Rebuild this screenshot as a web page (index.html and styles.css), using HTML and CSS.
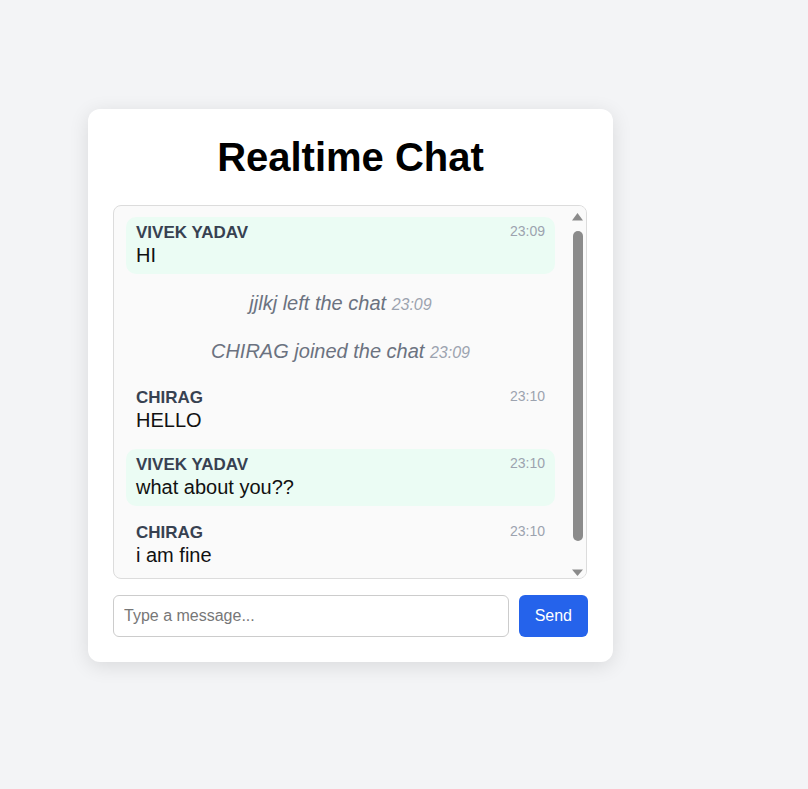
FILE: index.html
```html
<!DOCTYPE html>
<html lang="en">
<head>
<meta charset="utf-8">
<title>Realtime Chat</title>
<link rel="stylesheet" href="styles.css">
</head>
<body>
<div class="card">
  <h1 class="title">Realtime Chat</h1>
  <div class="chat-box">
    <div class="messages">
      <div class="msg msg-own">
        <div class="msg-head"><span class="msg-name">VIVEK YADAV</span><span class="msg-time">23:09</span></div>
        <div class="msg-text">HI</div>
      </div>
      <div class="sys">jjlkj left the chat <span class="sys-time">23:09</span></div>
      <div class="sys">CHIRAG joined the chat <span class="sys-time">23:09</span></div>
      <div class="msg">
        <div class="msg-head"><span class="msg-name">CHIRAG</span><span class="msg-time">23:10</span></div>
        <div class="msg-text">HELLO</div>
      </div>
      <div class="msg msg-own">
        <div class="msg-head"><span class="msg-name">VIVEK YADAV</span><span class="msg-time">23:10</span></div>
        <div class="msg-text">what about you??</div>
      </div>
      <div class="msg">
        <div class="msg-head"><span class="msg-name">CHIRAG</span><span class="msg-time">23:10</span></div>
        <div class="msg-text">i am fine</div>
      </div>
    </div>
    <div class="scrollbar" aria-hidden="true">
      <svg class="scroll-btn" width="17" height="17" viewBox="0 0 17 17"><polygon points="3,14.5 14,14.5 8.5,7" fill="#8b8b8b"/></svg>
      <div class="scroll-track"><div class="scroll-thumb"></div></div>
      <svg class="scroll-btn" width="17" height="17" viewBox="0 0 17 17"><polygon points="3,8.5 14,8.5 8.5,15" fill="#8b8b8b"/></svg>
    </div>
  </div>
  <form class="composer" onsubmit="return false">
    <input class="composer-input" type="text" placeholder="Type a message...">
    <button class="composer-send" type="submit">Send</button>
  </form>
</div>
</body>
</html>
```
FILE: styles.css
```css
* { box-sizing: border-box; }
html, body { margin: 0; padding: 0; }
body {
  background: #f3f4f6;
  font-family: "Liberation Sans", Arial, sans-serif;
  min-height: 789px;
}
.card {
  width: 525px;
  margin: 109px 0 0 88px;
  padding: 25px;
  background: #ffffff;
  border-radius: 12px;
  box-shadow: 0 4px 20px rgba(0, 0, 0, 0.11);
}
.title {
  margin: 0 0 25px;
  font-size: 40px;
  font-weight: 700;
  line-height: 46px;
  text-align: center;
  color: #000;
}
.chat-box {
  height: 374px;
  margin-right: 1px;
  border: 1px solid #dcdcdc;
  border-radius: 8px;
  background: #fafafa;
  display: flex;
  overflow: hidden;
}
.messages {
  flex: 1;
  min-width: 0;
  overflow: hidden;
  padding: 11px 14px 0 12px;
  display: flex;
  flex-direction: column;
  gap: 10.5px;
}
.scrollbar {
  width: 17px;
  flex: none;
  display: flex;
  flex-direction: column;
  background: #fafafa;
}
.scroll-btn {
  display: block;
  flex: none;
}
.scroll-track {
  flex: 1;
  display: flex;
  flex-direction: column;
  align-items: center;
}
.scroll-thumb {
  width: 10px;
  height: 310px;
  margin-top: 8px;
  border-radius: 5px;
  background: #8b8b8b;
}
.msg {
  padding: 6px 10px 7px;
  border-radius: 10px;
  font-size: 20px;
  flex: none;
}
.msg-own { background: #ebfcf4; }
.msg-head {
  display: flex;
  justify-content: space-between;
  align-items: flex-start;
  margin-bottom: 1px;
}
.msg-name {
  font-size: 17px;
  font-weight: 700;
  color: #374151;
}
.msg-time {
  font-size: 14px;
  color: #9ca3af;
}
.msg-text {
  color: #111;
  line-height: 23px;
}
.sys {
  flex: none;
  padding: 7px 0;
  text-align: center;
  font-size: 20px;
  line-height: 23px;
  font-style: italic;
  color: #6b7280;
}
.sys-time {
  font-size: 16px;
  color: #9ca3af;
}
.composer {
  display: flex;
  gap: 10px;
  margin-top: 16px;
}
.composer-input {
  flex: 1;
  height: 42px;
  padding: 0 10px;
  border: 1px solid #cccccc;
  border-radius: 6px;
  font-family: inherit;
  font-size: 16px;
  color: #111;
  background: #fff;
}
.composer-input::placeholder { color: #777; }
.composer-send {
  height: 42px;
  padding: 0 16px;
  border: none;
  border-radius: 6px;
  background: #2563eb;
  color: #fff;
  font-family: inherit;
  font-size: 16px;
}
```
